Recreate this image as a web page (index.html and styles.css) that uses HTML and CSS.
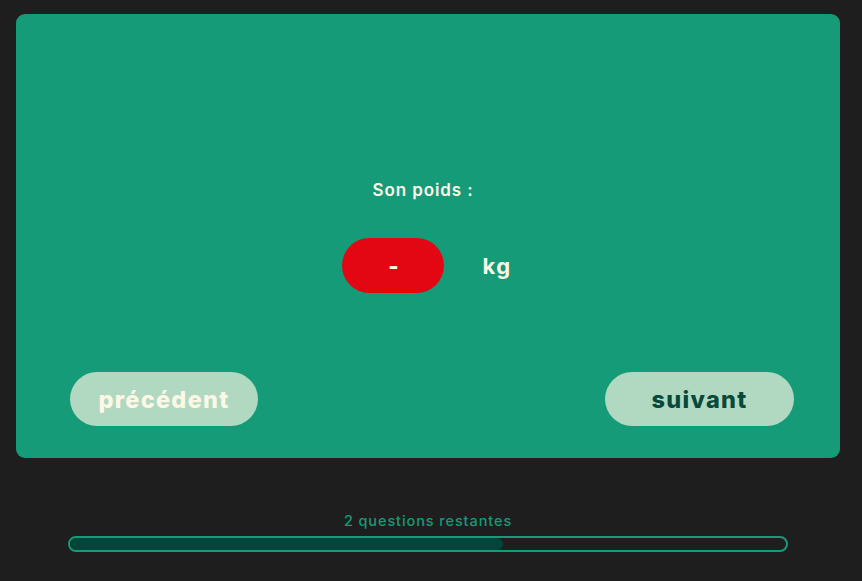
FILE: index.html
```html
<!DOCTYPE html>
<html lang="fr">
<head>
<meta charset="utf-8">
<link rel="stylesheet" href="styles.css">
</head>
<body>
<main class="page">
  <section class="card">
    <div class="question">
      <p class="label">Son poids :</p>
      <div class="answer-row">
        <button class="value-pill">-</button>
        <span class="unit">kg</span>
      </div>
    </div>
    <div class="nav">
      <button class="nav-btn prev">précédent</button>
      <button class="nav-btn next">suivant</button>
    </div>
  </section>
  <footer class="progress">
    <p class="progress-text">2 questions restantes</p>
    <div class="bar"><div class="bar-fill" style="width: 60.5%"></div></div>
  </footer>
</main>
</body>
</html>
```

FILE: styles.css
```css
html, body {
  margin: 0;
  padding: 0;
  background: #1e1e1e;
  font-family: Inter, "Noto Sans", sans-serif;
}
.page {
  padding: 14px 22px 0 16px;
}
.card {
  background: #169b78;
  border-radius: 9px;
  height: 444px;
  box-sizing: border-box;
  padding: 166px 46px 32px 54px;
  display: flex;
  flex-direction: column;
}
.question {
  display: flex;
  flex-direction: column;
  align-items: center;
  margin-left: -10px;
}
.label {
  margin: 0 8px 0 0;
  color: #fdf8e6;
  font-size: 17px;
  font-weight: 600;
  line-height: 20px;
  letter-spacing: 0.9px;
}
.answer-row {
  margin-top: 38px;
  display: flex;
  align-items: center;
  gap: 38px;
}
.value-pill {
  width: 102px;
  height: 55px;
  border: none;
  border-radius: 28px;
  background: #e30613;
  color: #fdf8e6;
  font-family: inherit;
  font-size: 22px;
  font-weight: 800;
  padding: 0;
}
.unit {
  color: #fdf8e6;
  font-size: 22px;
  font-weight: 700;
  letter-spacing: 1.5px;
}
.nav {
  margin-top: auto;
  display: flex;
  justify-content: space-between;
}
.nav-btn {
  width: 188px;
  height: 54px;
  border: none;
  border-radius: 27px;
  background: #b1d9c2;
  font-family: inherit;
  font-size: 23.5px;
  font-weight: 800;
  letter-spacing: 1.3px;
  padding: 0;
}
.prev { color: #fdf8e6; }
.next { color: #074a3c; width: 189px; }
.progress {
  padding: 55px 52px 0 52px;
}
.progress-text {
  margin: 0 0 7px;
  text-align: center;
  color: #169b78;
  font-size: 14.5px;
  font-weight: 500;
  line-height: 16px;
  letter-spacing: 0.9px;
}
.bar {
  height: 16px;
  border: 2px solid #169b78;
  border-radius: 9px;
  box-sizing: border-box;
  overflow: hidden;
}
.bar-fill {
  height: 100%;
  background: #00443a;
  border-radius: 0 7px 7px 0;
}
```
